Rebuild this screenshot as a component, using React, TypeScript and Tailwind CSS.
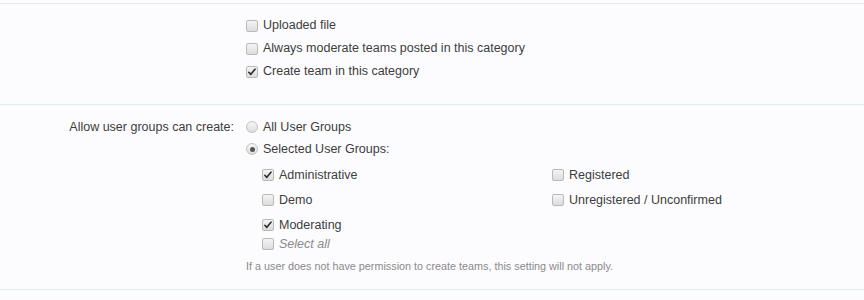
import React from 'react';

const font = { fontFamily: '"Liberation Sans", Arial, sans-serif' };

const Box: React.FC<{ checked?: boolean }> = ({ checked }) => (
  <span className="relative inline-flex h-[12px] w-[12px] shrink-0 items-center justify-center rounded-[2px] border border-[#b9b9b9] bg-gradient-to-b from-[#f4f4f4] to-[#dcdcdc]">
    {checked && (
      <svg viewBox="0 0 12 12" className="h-[10px] w-[10px]">
        <path d="M2.2 6.3 L4.6 8.8 L9.6 2.6" fill="none" stroke="#2b2b2b" strokeWidth="1.9" strokeLinecap="round" strokeLinejoin="round" />
      </svg>
    )}
  </span>
);

const Radio: React.FC<{ checked?: boolean }> = ({ checked }) => (
  <span className="inline-flex h-[12px] w-[12px] shrink-0 items-center justify-center rounded-full border border-[#c2c2c2] bg-gradient-to-b from-[#f6f6f6] to-[#dedede]">
    {checked && <span className="h-[5px] w-[5px] rounded-full bg-[#555]" />}
  </span>
);

const Option: React.FC<{ label: string; checked?: boolean; radio?: boolean; className?: string; italic?: boolean }> = ({
  label,
  checked,
  radio,
  className = 'h-[23px]',
  italic,
}) => (
  <li className={`flex items-center gap-[5px] ${className}`}>
    {radio ? <Radio checked={checked} /> : <Box checked={checked} />}
    <span className={italic ? 'italic text-[#8a8a8a]' : 'text-[#3d3d3d]'}>{label}</span>
  </li>
);

export default function App() {
  const groups = [
    { label: 'Administrative', checked: true },
    { label: 'Registered' },
    { label: 'Demo' },
    { label: 'Unregistered / Unconfirmed' },
    { label: 'Moderating', checked: true },
  ];

  return (
    <div className="min-h-[300px] w-[864px] bg-[#fcfcfe] pt-[3px] text-[12.5px] leading-none" style={font}>
      {/* first block */}
      <div className="flex border-t border-[#dcedef]">
        <div className="w-[234px] shrink-0" />
        <ul className="ml-[12px] pb-[21px] pt-[10px]">
          <Option label="Uploaded file" />
          <Option label="Always moderate teams posted in this category" />
          <Option label="Create team in this category" checked />
        </ul>
      </div>

      {/* user groups */}
      <div className="flex border-t border-[#dcedef] pb-[15px] pt-[11px]">
        <div className="flex h-[22px] w-[234px] shrink-0 items-center justify-end text-[#3d3d3d]">
          Allow user groups can create:
        </div>
        <div className="ml-[12px] flex flex-col">
          <ul>
            <Option radio label="All User Groups" className="h-[22px]" />
            <Option radio checked label="Selected User Groups:" className="h-[22px]" />
          </ul>
          <ul className="mt-[5px] grid grid-cols-[290px_auto] gap-y-[5px] pl-[16px]">
            {groups.map((g) => (
              <Option key={g.label} label={g.label} checked={g.checked} className="h-[20px]" />
            ))}
          </ul>
          <ul className="pl-[16px]">
            <Option label="Select all" italic className="h-[18px]" />
          </ul>
          <p className="mt-[5px] flex h-[16px] items-center text-[10.8px] text-[#8a8a8a]">
            If a user does not have permission to create teams, this setting will not apply.
          </p>
        </div>
      </div>
      <div className="border-t border-[#dcedef]" />
    </div>
  );
}
